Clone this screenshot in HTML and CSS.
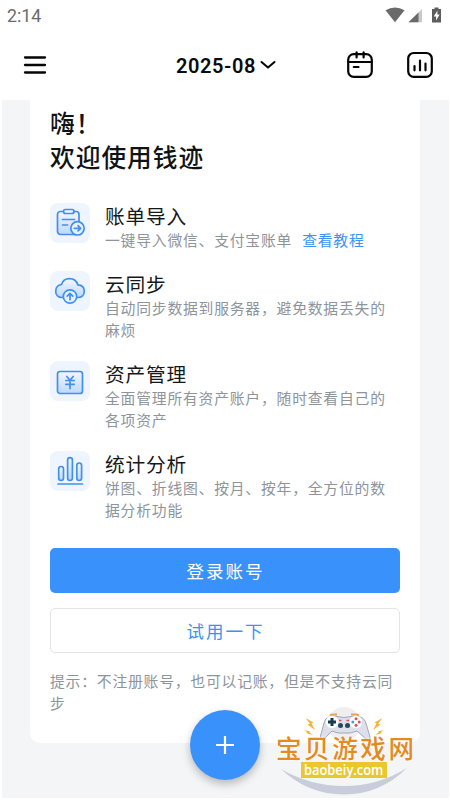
FILE: index.html
```
<!DOCTYPE html>
<html lang="zh-CN">
<head>
<meta charset="utf-8">
<meta name="viewport" content="width=device-width, initial-scale=1">
<title>钱迹</title>
<link rel="stylesheet" href="styles.css">
</head>
<body>
<div class="app">
  <header class="status">
    <span>2:14</span>
    <svg width="58" height="18" viewBox="0 0 58 18">
      <path d="M1.500 3.300Q11 -2.200 20.500 3.300L11 15.200Z" fill="#6a6a6a"/>
      <path d="M38 2V15.300H24.500Z" fill="#c9c9c9"/>
      <path d="M34.500 5.500V15.300H24.500Z" fill="#6a6a6a"/>
      <path d="M50.500 .5h4v1.500h2.500v13.500h-9V2h2.500Z" fill="#5c5c5c"/>
      <path d="M53.500 3.500 49.700 9.600h2.400v3.900l3.500-6h-2.300Z" fill="#fff"/>
    </svg>
  </header>
  <nav class="toolbar">
    <svg class="menu" width="24" height="20" viewBox="0 0 24 20" fill="none" stroke="#050505" stroke-width="2.300" stroke-linecap="round"><path d="M2 2.500H22M2 10H22M2 17.500H22"/></svg>
    <div class="month"><span>2025-08</span>
      <svg width="16" height="10" viewBox="0 0 16 10" fill="none" stroke="#050505" stroke-width="2" stroke-linecap="round" stroke-linejoin="round"><path d="M1.500 2 8 7.600 14.500 2"/></svg>
    </div>
    <div class="actions">
      <svg width="28" height="28" viewBox="0 0 28 28" fill="none" stroke="#050505" stroke-width="2.200" stroke-linecap="round"><rect x="2.200" y="3.200" width="23.600" height="22.600" rx="5.500"/><path d="M2 11H26M10.600 1.300V6.500M17.600 1.300V6.500M7.800 16H12.500"/></svg>
      <svg width="28" height="28" viewBox="0 0 28 28" fill="none" stroke="#050505" stroke-width="2.200" stroke-linecap="round"><rect x="2.200" y="2" width="23.600" height="23.800" rx="5.500"/><path d="M8.500 15V19.300M14 9.500V19.300M19.500 12.500V19.300"/></svg>
    </div>
  </nav>
  <main class="content">
    <section class="card">
      <h1>嗨！<br>欢迎使用钱迹</h1>
      <ul class="features">
        <li>
          <div class="icon"><svg width="40" height="40" viewBox="0 0 40 40" fill="none" stroke="#4190ee" stroke-width="1.700" stroke-linecap="round" stroke-linejoin="round">
            <defs><linearGradient id="tint" x1="0" y1="0" x2="0" y2="1"><stop offset="0" stop-color="#f3f7ff"/><stop offset="1" stop-color="#bdd9fc"/></linearGradient></defs>
            <rect x="7.500" y="8.500" width="21.500" height="23" rx="3" fill="url(#tint)"/><rect x="13.500" y="6.500" width="10.500" height="4" rx="2" fill="#eff5ff"/><path d="M12.500 16.500H24.500M12.500 22H17.500"/><circle cx="27.500" cy="25.300" r="6.700" fill="#e6f1ff"/><path d="M24.300 25.300H30.500M28 22.700 30.700 25.300 28 27.900"/></svg></div>
          <div class="copy"><h2>账单导入</h2><p>一键导入微信、支付宝账单<a>查看教程</a></p></div>
        </li>
        <li>
          <div class="icon"><svg width="40" height="40" viewBox="0 0 40 40" fill="none" stroke="#4190ee" stroke-width="1.700" stroke-linecap="round" stroke-linejoin="round">
            <path d="M12 26.500C8 26.500 5.700 23.500 5.700 20.200C5.700 16.500 8.300 14 11.500 13.500C12.500 9.800 15.700 7.600 19.500 7.600C23.700 7.600 26.800 10 27.800 13.800C31.700 14 34.300 16.500 34.300 20.200C34.300 24 31.700 26.500 28 26.500Z" fill="url(#tint)"/><circle cx="20" cy="25.500" r="6.700" fill="#e6f1ff"/><path d="M20 28.700V22.700M17.200 25.200 20 22.400 22.800 25.200"/></svg></div>
          <div class="copy"><h2>云同步</h2><p>自动同步数据到服务器，避免数据丢失的麻烦</p></div>
        </li>
        <li>
          <div class="icon"><svg width="40" height="40" viewBox="0 0 40 40" fill="none" stroke="#4190ee" stroke-width="1.700" stroke-linecap="round" stroke-linejoin="round">
            <rect x="7.500" y="10.500" width="25" height="22" rx="2.500" fill="url(#tint)"/><path d="M16.800 15.500 20 19.200 23.200 15.500M20 19.200V27.500M15.800 19.500H24.200M15.800 23.300H24.200"/></svg></div>
          <div class="copy"><h2>资产管理</h2><p>全面管理所有资产账户，随时查看自己的各项资产</p></div>
        </li>
        <li>
          <div class="icon"><svg width="40" height="40" viewBox="0 0 40 40" fill="none" stroke="#4190ee" stroke-width="1.700" stroke-linecap="round">
            <rect x="8.700" y="15.500" width="4.800" height="14" rx="2.400" fill="url(#tint)"/><rect x="17.600" y="6.700" width="4.800" height="22.800" rx="2.400" fill="url(#tint)"/><rect x="26.800" y="12" width="4.800" height="17.500" rx="2.400" fill="url(#tint)"/><path d="M8 33H32.500"/></svg></div>
          <div class="copy"><h2>统计分析</h2><p>饼图、折线图、按月、按年，全方位的数据分析功能</p></div>
        </li>
      </ul>
      <button class="btn primary">登录账号</button>
      <button class="btn outline">试用一下</button>
      <p class="hint">提示：不注册账号，也可以记账，但是不支持云同步</p>
    </section>
  </main>
  <button class="fab" aria-label="记一笔"><svg width="20" height="20" viewBox="0 0 20 20" stroke="#fff" stroke-width="2.200"><path d="M1 10H19M10 1V19"/></svg></button>
  <div class="brand">
    <svg class="brand-art" width="150" height="95" viewBox="0 0 150 95">
      <circle cx="74" cy="24" r="17" fill="#efeff0"/>
      <path d="M11 69Q40 86 74 86Q108 86 137 68Q110 94.500 74 94.500Q38 94.500 11 69Z" fill="#c9ccda"/>
      <g fill="#f3b42f"><path d="M35.500 18 43.500 22.500 41.500 23.500 45 30 37.500 24.500 40 23.500Z"/><path d="M112.500 18 104.500 22.500 106.500 23.500 103 30 110.500 24.500 108 23.500Z"/><path d="M34 30 40 31.500 39.500 32.500 43 35 36 33 37 32Z"/><path d="M114 30 108 31.500 108.500 32.500 105 35 112 33 111 32Z"/></g>
      <path d="M60 15.500Q61 14.500 65 14.500H67M81 14.500H85Q88 14.500 89 15.500" fill="none" stroke="#e8a14b" stroke-width="2"/>
      <path d="M59 17Q65 15.500 74 17.500Q83 15.500 90 17Q95 18 96.500 25L100 37Q100 41 96 39L87 31Q80 34 74 33Q68 34 62 31L54 39Q50 42 50.500 36L54 23Q55 18 59 17Z" fill="#dddfeb" stroke="#a4a6bc" stroke-width="1"/>
      <circle cx="62" cy="22" r="6.200" fill="#fff"/><path d="M62 18V26M58 22H66" stroke="#173a50" stroke-width="3"/>
      <circle cx="86" cy="22" r="6.200" fill="#fff"/><g fill="#e84a5f"><circle cx="86" cy="18.800" r="1.500"/><circle cx="86" cy="25.200" r="1.500"/><circle cx="89.200" cy="22" r="1.500"/></g><circle cx="82.800" cy="22" r="1.500" fill="#35a9c9"/>
      <path d="M69 20.500H71.500M76.500 20.500H79" stroke="#e84a5f" stroke-width="1.500"/><circle cx="70.500" cy="25.500" r="2.500" fill="#24495d"/><circle cx="77.500" cy="25.500" r="2.500" fill="#24495d"/>
    </svg>
    <strong>宝贝游戏网</strong>
    <div class="site"><span>baobeiy.com</span></div>
  </div>
</div>
</body>
</html>
```
FILE: styles.css
```
* { box-sizing: border-box; }
body, h1, h2, p, ul { margin: 0; padding: 0; }
body {
  background: #fff;
  font-family: "Noto Sans CJK SC", sans-serif;
  overflow: hidden;
}
svg { display: block; flex: none; }
.app {
  position: relative;
  display: flex;
  flex-direction: column;
  width: 450px;
  height: 800px;
  overflow: hidden;
}
.status {
  display: flex;
  justify-content: space-between;
  align-items: center;
  height: 30px;
  padding: 0 8px 0 7px;
  font: 17.800px/30px Roboto, sans-serif;
  color: #6b6b6b;
}
.status span { padding-top: 2px; }
.status svg { margin-top: 1px; }
.toolbar {
  display: grid;
  grid-template-columns: 1fr auto 1fr;
  align-items: center;
  height: 70px;
  padding: 0 16px 0 23px;
}
.month {
  display: flex;
  align-items: center;
  gap: 4px;
  margin-left: -5px;
  font: 600 20px/24px Roboto, sans-serif;
  letter-spacing: .6px;
  color: #0b0b0b;
}
.month span { padding-top: 1px; }
.actions { display: flex; justify-content: flex-end; gap: 32px; }
.content {
  flex: 1;
  margin: 0 1px 2px 2px;
  padding: 0 29px 0 28px;
  background: #f4f5f7;
}
.card {
  height: 643px;
  padding: 5px 20px 0;
  background: #fff;
  border-radius: 0 0 10px 10px;
}
h1 {
  height: 98px;
  font-size: 24.700px;
  font-weight: 500;
  line-height: 34px;
  letter-spacing: 1px;
  color: #101316;
}
.features { list-style: none; }
.features li { display: flex; gap: 15px; margin-bottom: 20px; }
.icon {
  flex: none;
  width: 40px;
  height: 40px;
  border-radius: 8px;
  background: #eff5ff;
}
.copy { flex: 1; margin-right: -10px; }
h2 {
  height: 26px;
  font-size: 19.700px;
  font-weight: 400;
  line-height: 26px;
  letter-spacing: .8px;
  color: #15181b;
}
.copy p, .hint {
  font-size: 14.800px;
  line-height: 22px;
  letter-spacing: .8px;
  color: #8d949c;
}
.copy p { width: 285px; }
.copy a { margin-left: 10px; color: #3d92f5; }
.btn {
  display: block;
  width: 100%;
  height: 45px;
  border: 0;
  border-radius: 5px;
  padding: 0 0 0 1px;
  font: 400 17.500px/45px "Noto Sans CJK SC", sans-serif;
  letter-spacing: 2px;
}
.primary { margin-top: 27px; background: #3992fb; color: #fff; }
.outline { margin: 15px 0 17px; border: 1.500px solid #e3e4e6; background: #fff; color: #3992fb; line-height: 43px; }
.fab {
  position: absolute;
  left: 190px;
  top: 710px;
  display: grid;
  place-items: center;
  width: 70px;
  height: 70px;
  border: 0;
  border-radius: 50%;
  background: #3992fb;
  box-shadow: 0 4px 8px rgba(0, 0, 0, .25);
}
.brand {
  position: absolute;
  left: 270px;
  top: 700px;
  width: 150px;
  height: 95px;
}
.brand-art { position: absolute; inset: 0; }
.brand strong {
  position: absolute;
  left: 6px;
  top: 34px;
  font-size: 25.500px;
  line-height: 26px;
  font-weight: 500;
  letter-spacing: 2.600px;
  white-space: nowrap;
  color: #e58a1f;
  text-shadow: 0 0 2px #fff, 0 0 2px #fff;
}
.site {
  position: absolute;
  left: 31px;
  top: 62px;
  display: flex;
  justify-content: center;
  width: 86px;
  height: 16px;
  background: #e9c72e;
}
.site span {
  color: #fff;
  font: 600 14.500px/15px "Open Sans", sans-serif;
  transform: scaleX(.89);
}
```
